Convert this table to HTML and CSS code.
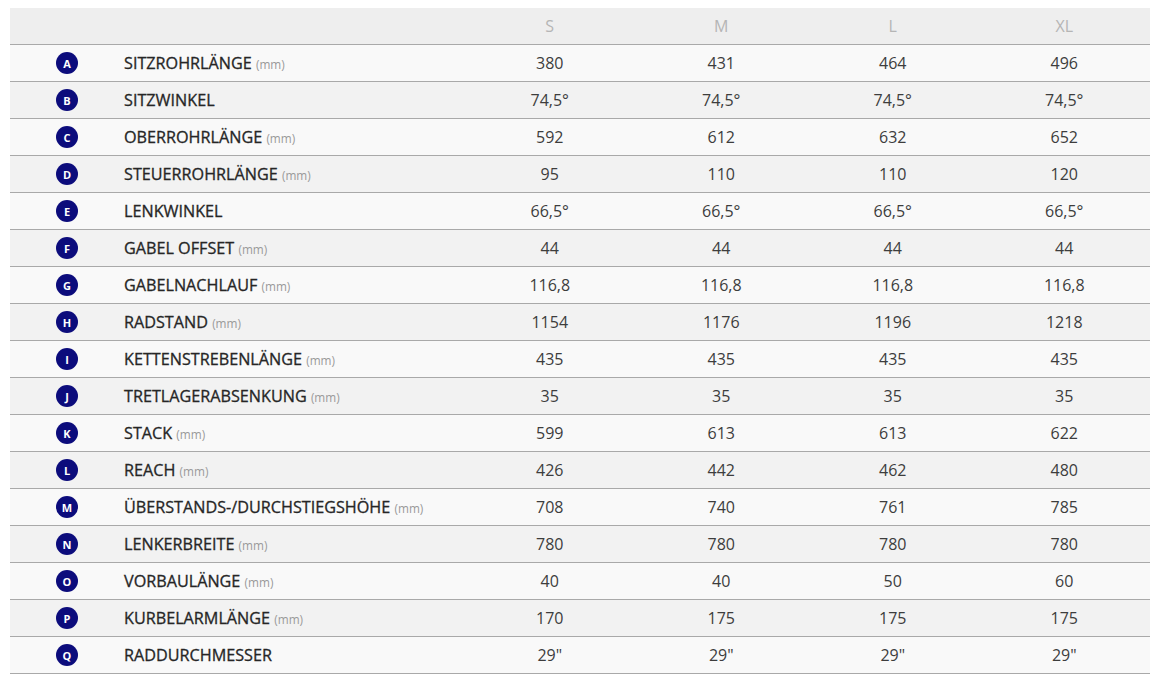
FILE: index.html
```html
<!DOCTYPE html>
<html lang="de">
<head>
<meta charset="utf-8">
<link rel="stylesheet" href="styles.css">
</head>
<body>
<table class="geo">
  <thead>
    <tr class="head">
      <th class="c-badge"></th>
      <th class="c-label"></th>
      <th class="c-val">S</th>
      <th class="c-val">M</th>
      <th class="c-val">L</th>
      <th class="c-val">XL</th>
    </tr>
  </thead>
  <tbody>
    <tr><td class="c-badge"><span class="badge">A</span></td><td class="c-label">SITZROHRLÄNGE <span class="unit">(mm)</span></td><td>380</td><td>431</td><td>464</td><td>496</td></tr>
    <tr><td class="c-badge"><span class="badge">B</span></td><td class="c-label">SITZWINKEL</td><td>74,5°</td><td>74,5°</td><td>74,5°</td><td>74,5°</td></tr>
    <tr><td class="c-badge"><span class="badge">C</span></td><td class="c-label">OBERROHRLÄNGE <span class="unit">(mm)</span></td><td>592</td><td>612</td><td>632</td><td>652</td></tr>
    <tr><td class="c-badge"><span class="badge">D</span></td><td class="c-label">STEUERROHRLÄNGE <span class="unit">(mm)</span></td><td>95</td><td>110</td><td>110</td><td>120</td></tr>
    <tr><td class="c-badge"><span class="badge">E</span></td><td class="c-label">LENKWINKEL</td><td>66,5°</td><td>66,5°</td><td>66,5°</td><td>66,5°</td></tr>
    <tr><td class="c-badge"><span class="badge">F</span></td><td class="c-label">GABEL OFFSET <span class="unit">(mm)</span></td><td>44</td><td>44</td><td>44</td><td>44</td></tr>
    <tr><td class="c-badge"><span class="badge">G</span></td><td class="c-label">GABELNACHLAUF <span class="unit">(mm)</span></td><td>116,8</td><td>116,8</td><td>116,8</td><td>116,8</td></tr>
    <tr><td class="c-badge"><span class="badge">H</span></td><td class="c-label">RADSTAND <span class="unit">(mm)</span></td><td>1154</td><td>1176</td><td>1196</td><td>1218</td></tr>
    <tr><td class="c-badge"><span class="badge">I</span></td><td class="c-label">KETTENSTREBENLÄNGE <span class="unit">(mm)</span></td><td>435</td><td>435</td><td>435</td><td>435</td></tr>
    <tr><td class="c-badge"><span class="badge">J</span></td><td class="c-label">TRETLAGERABSENKUNG <span class="unit">(mm)</span></td><td>35</td><td>35</td><td>35</td><td>35</td></tr>
    <tr><td class="c-badge"><span class="badge">K</span></td><td class="c-label">STACK <span class="unit">(mm)</span></td><td>599</td><td>613</td><td>613</td><td>622</td></tr>
    <tr><td class="c-badge"><span class="badge">L</span></td><td class="c-label">REACH <span class="unit">(mm)</span></td><td>426</td><td>442</td><td>462</td><td>480</td></tr>
    <tr><td class="c-badge"><span class="badge">M</span></td><td class="c-label">ÜBERSTANDS-/DURCHSTIEGSHÖHE <span class="unit">(mm)</span></td><td>708</td><td>740</td><td>761</td><td>785</td></tr>
    <tr><td class="c-badge"><span class="badge">N</span></td><td class="c-label">LENKERBREITE <span class="unit">(mm)</span></td><td>780</td><td>780</td><td>780</td><td>780</td></tr>
    <tr><td class="c-badge"><span class="badge">O</span></td><td class="c-label">VORBAULÄNGE <span class="unit">(mm)</span></td><td>40</td><td>40</td><td>50</td><td>60</td></tr>
    <tr><td class="c-badge"><span class="badge">P</span></td><td class="c-label">KURBELARMLÄNGE <span class="unit">(mm)</span></td><td>170</td><td>175</td><td>175</td><td>175</td></tr>
    <tr><td class="c-badge"><span class="badge">Q</span></td><td class="c-label">RADDURCHMESSER</td><td>29"</td><td>29"</td><td>29"</td><td>29"</td></tr>
  </tbody>
</table>
</body>
</html>
```
FILE: styles.css
```css
html, body {
  margin: 0;
  padding: 0;
  background: #fff;
}
body {
  padding: 8px 16px 0 10px;
  font-family: "Open Sans", "Liberation Sans", sans-serif;
  color: #333;
}
.geo {
  width: 1140px;
  border-collapse: collapse;
  table-layout: fixed;
  font-size: 16px;
}
.geo th, .geo td {
  padding: 0;
  text-align: center;
  vertical-align: middle;
}
.head {
  background: #eeeeee;
  height: 36px;
}
.head th {
  font-weight: 400;
  color: #b5b5b5;
  border-bottom: 1px solid #a9a9a9;
}
.c-badge { width: 114px; }
.c-label { width: 340px; }
.geo td.c-label {
  text-align: left;
  color: #262626;
  font-weight: 400;
  font-size: 16.2px;
  -webkit-text-stroke: 0.3px #262626;
}
.geo tbody tr {
  height: 37px;
}
.geo tbody td {
  border-bottom: 1px solid #a9a9a9;
  color: #3d3d3d;
}
.geo tbody tr:nth-child(odd) { background: #f9f9f9; }
.geo tbody tr:nth-child(even) { background: #f2f2f2; }
.badge {
  display: inline-flex;
  align-items: center;
  justify-content: center;
  width: 22px;
  height: 22px;
  border-radius: 50%;
  background: #0c0c7c;
  color: #fff;
  font-size: 11px;
  font-weight: 700;
  line-height: 1;
  vertical-align: middle;
}
.unit {
  font-size: 11.8px;
  font-weight: 400;
  color: #9a9a9a;
  -webkit-text-stroke: 0;
}
```
